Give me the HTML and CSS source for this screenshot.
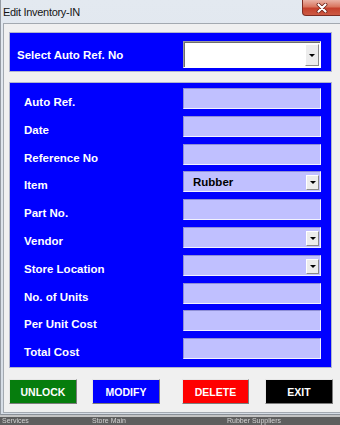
FILE: index.html
```html
<!DOCTYPE html>
<html>
<head>
<meta charset="utf-8">
<title>Edit Inventory-IN</title>
<link rel="stylesheet" href="styles.css">
</head>
<body>
<div class="window">
  <div class="titlebar">
    <span class="title">Edit Inventory-IN</span>
    <div class="close">
      <svg width="12" height="10" viewBox="0 0 12 10">
        <path d="M2.5 1.5 L9.5 8.5 M9.5 1.5 L2.5 8.5" stroke="#6b1f14" stroke-width="3.8" stroke-linecap="round"/>
        <path d="M2.5 1.5 L9.5 8.5 M9.5 1.5 L2.5 8.5" stroke="#ffffff" stroke-width="2.2" stroke-linecap="round"/>
      </svg>
    </div>
  </div>
  <div class="client">
    <div class="panel panel-top">
      <span class="label">Select Auto Ref. No</span>
      <div class="combo-white"><span class="drop"></span></div>
    </div>
    <div class="panel panel-form">
      <span class="label">Auto Ref.</span><div class="field"></div>
      <span class="label">Date</span><div class="field"></div>
      <span class="label">Reference No</span><div class="field"></div>
      <span class="label">Item</span><div class="field field-select"><span class="field-text">Rubber</span><span class="drop"></span></div>
      <span class="label">Part No.</span><div class="field"></div>
      <span class="label">Vendor</span><div class="field field-select"><span class="field-text"></span><span class="drop"></span></div>
      <span class="label">Store Location</span><div class="field field-select"><span class="field-text"></span><span class="drop"></span></div>
      <span class="label">No. of Units</span><div class="field"></div>
      <span class="label">Per Unit Cost</span><div class="field"></div>
      <span class="label">Total Cost</span><div class="field"></div>
    </div>
    <div class="buttons">
      <button class="btn btn-unlock">UNLOCK</button>
      <button class="btn btn-modify">MODIFY</button>
      <button class="btn btn-delete">DELETE</button>
      <button class="btn btn-exit">EXIT</button>
    </div>
  </div>
</div>
<div class="backdrop">
  <span class="bg-text bg-1">Services</span>
  <span class="bg-text bg-2">Store Main</span>
  <span class="bg-text bg-3">Rubber Suppliers</span>
</div>
</body>
</html>
```

FILE: styles.css
```css
html, body {
  margin: 0;
  padding: 0;
}
body {
  width: 340px;
  height: 425px;
  overflow: hidden;
  background: #5e5e5e;
  font-family: "Liberation Sans", Arial, sans-serif;
}
.window {
  height: 415px;
  box-sizing: border-box;
  background: linear-gradient(#e3e9f0, #d6dde6);
  border-left: 1px solid #959ba3;
  border-bottom: 1px solid #8a9098;
  display: flex;
  flex-direction: column;
  overflow: hidden;
}
.titlebar {
  height: 22px;
  flex: none;
  display: flex;
  align-items: flex-start;
}
.title {
  font-size: 11px;
  letter-spacing: -0.3px;
  line-height: 14px;
  padding: 5px 0 0 2px;
  color: #151515;
}
.close {
  margin-left: auto;
  margin-right: -2px;
  width: 40px;
  height: 16px;
  box-sizing: border-box;
  background: linear-gradient(#eab2a5, #d9765f 45%, #c5412c 55%, #cc5a43);
  border: 1px solid #7d2c22;
  border-top: none;
  border-radius: 0 0 0 4px;
  display: flex;
  align-items: center;
  justify-content: center;
}
.close svg {
  display: block;
}
.client {
  flex: 1;
  margin: 1px 0 1px 2px;
  background: #f0f0f0;
  border-top: 1px solid #a3a9b0;
  border-left: 1px solid #a3a9b0;
  border-bottom: 1px solid #a3a9b0;
  padding: 8px 0 0 5px;
}
.panel {
  width: 323px;
  box-sizing: border-box;
  background: #0000ff;
  border: 1px solid #b0b5cc;
}
.label {
  color: #ffffff;
  font-weight: bold;
  font-size: 11.5px;
  line-height: 14px;
  white-space: nowrap;
}
.panel-top {
  height: 40px;
  display: flex;
  align-items: center;
  justify-content: space-between;
  padding: 5px 10px 0 7px;
}
.combo-white {
  width: 138px;
  height: 27px;
  box-sizing: border-box;
  background: #ffffff;
  border: 1px solid;
  border-color: #9c9c9c #ffffff #ffffff #9c9c9c;
  box-shadow: inset 1px 1px 0 #6e6e6e;
  display: flex;
  justify-content: flex-end;
  padding: 2px 1px 1px 0;
}
.drop {
  width: 14px;
  flex: none;
  box-sizing: border-box;
  background: #ececec;
  border: 1px solid;
  border-color: #ffffff #8a8a8a #8a8a8a #ffffff;
  display: flex;
  align-items: center;
  justify-content: center;
}
.drop::after {
  content: "";
  border-left: 3px solid transparent;
  border-right: 3px solid transparent;
  border-top: 3px solid #000000;
}
.panel-form {
  margin-top: 10px;
  height: 286px;
  display: grid;
  grid-template-columns: 1fr 138px;
  grid-auto-rows: 21px;
  row-gap: 6.8px;
  padding: 5px 10px 0 14px;
}
.panel-form .label {
  padding-top: 7px;
}
.field {
  background: #c0c0ff;
  box-sizing: border-box;
  border: 1px solid;
  border-color: #8e8ed6 #f2f2ff #f2f2ff #8e8ed6;
}
.field-select {
  display: flex;
  padding: 3px 1px 1px 0;
}
.field-text {
  flex: 1;
  padding-left: 9px;
  font-weight: bold;
  font-size: 11.5px;
  line-height: 15px;
  color: #000000;
}
.field-select .drop {
  width: 13px;
}
.buttons {
  display: flex;
  margin-top: 11px;
}
.btn {
  width: 68px;
  height: 25px;
  box-sizing: border-box;
  padding: 0;
  margin: 0;
  border: 1px solid;
  border-color: #e6e6e6 #7c7c7c #7c7c7c #e6e6e6;
  color: #ffffff;
  font-family: "Liberation Sans", Arial, sans-serif;
  font-weight: bold;
  font-size: 10.5px;
  display: flex;
  align-items: center;
  justify-content: center;
}
.btn-unlock {
  background: #067d0d;
}
.btn-modify {
  background: #0000ff;
  margin-left: 15px;
}
.btn-delete {
  background: #ff0000;
  margin-left: 22px;
  width: 67px;
}
.btn-exit {
  background: #000000;
  margin-left: 16px;
}
.backdrop {
  height: 10px;
  box-sizing: border-box;
  border-top: 2px solid #c4c4c4;
  background: #5e5e5e;
  display: flex;
  align-items: center;
  overflow: hidden;
}
.bg-text {
  color: #d2d2d2;
  font-size: 7px;
  line-height: 8px;
  filter: blur(0.4px);
  white-space: nowrap;
}
.bg-1 {
  padding-left: 2px;
  width: 90px;
}
.bg-2 {
  width: 135px;
}
```
